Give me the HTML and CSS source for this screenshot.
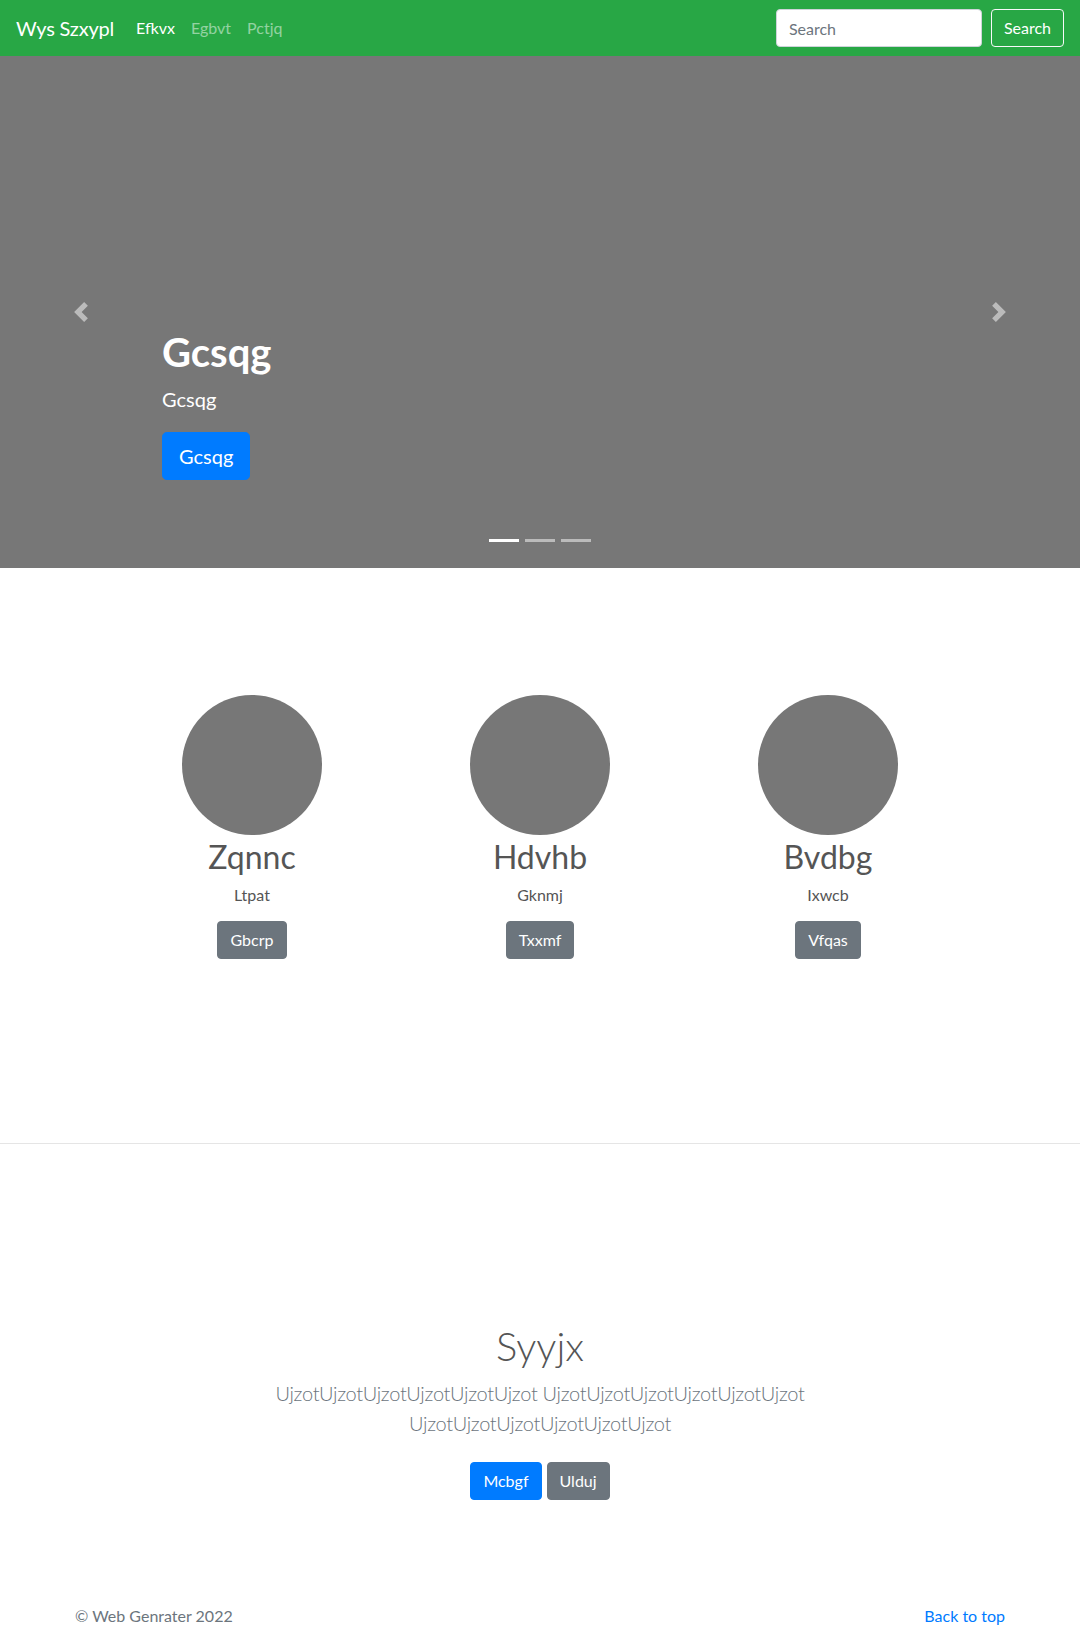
FILE: index.html
```html
<!DOCTYPE html>
<html lang="en">
<head>
<meta charset="utf-8">
<title>Wys Szxypl</title>
<link rel="stylesheet" href="styles.css">
</head>
<body>
<header class="navbar">
  <a class="brand" href="#">Wys Szxypl</a>
  <nav class="nav">
    <a class="nav-link active" href="#">Efkvx</a>
    <a class="nav-link" href="#">Egbvt</a>
    <a class="nav-link" href="#">Pctjq</a>
  </nav>
  <form class="search-form">
    <input class="search-input" type="text" placeholder="Search">
    <button class="btn-outline" type="button">Search</button>
  </form>
</header>

<section class="carousel">
  <a class="control control-prev" href="#">
    <svg class="control-icon" viewBox="0 0 8 8" width="20" height="20"><path fill="#fff" d="M5.25 0l-4 4 4 4 1.5-1.5L4.25 4l2.5-2.5L5.25 0z"/></svg>
  </a>
  <div class="caption">
    <h1 class="caption-title">Gcsqg</h1>
    <p class="caption-text">Gcsqg</p>
    <a class="btn btn-lg btn-primary" href="#">Gcsqg</a>
  </div>
  <a class="control control-next" href="#">
    <svg class="control-icon" viewBox="0 0 8 8" width="20" height="20"><path fill="#fff" d="M2.75 0l-1.5 1.5L3.75 4l-2.5 2.5L2.75 8l4-4-4-4z"/></svg>
  </a>
  <ol class="indicators">
    <li class="indicator active"></li>
    <li class="indicator"></li>
    <li class="indicator"></li>
  </ol>
</section>

<section class="marketing">
  <div class="marketing-row">
    <div class="feature">
      <div class="circle"></div>
      <h2 class="feature-title">Zqnnc</h2>
      <p class="feature-text">Ltpat</p>
      <a class="btn btn-secondary" href="#">Gbcrp</a>
    </div>
    <div class="feature">
      <div class="circle"></div>
      <h2 class="feature-title">Hdvhb</h2>
      <p class="feature-text">Gknmj</p>
      <a class="btn btn-secondary" href="#">Txxmf</a>
    </div>
    <div class="feature">
      <div class="circle"></div>
      <h2 class="feature-title">Bvdbg</h2>
      <p class="feature-text">Ixwcb</p>
      <a class="btn btn-secondary" href="#">Vfqas</a>
    </div>
  </div>
</section>

<hr class="divider">

<section class="jumbotron">
  <div class="jumbo-inner">
    <h1 class="jumbo-title">Syyjx</h1>
    <p class="lead">UjzotUjzotUjzotUjzotUjzotUjzot UjzotUjzotUjzotUjzotUjzotUjzot UjzotUjzotUjzotUjzotUjzotUjzot</p>
    <div class="jumbo-buttons">
      <a class="btn btn-primary" href="#">Mcbgf</a>
      <a class="btn btn-secondary" href="#">Ulduj</a>
    </div>
  </div>
</section>

<footer class="footer">
  <p class="copy">© Web Genrater 2022</p>
  <a class="back-top" href="#">Back to top</a>
</footer>
</body>
</html>
```

FILE: styles.css
```css
* { box-sizing: border-box; }
html, body { margin: 0; padding: 0; }
body {
  font-family: "Lato", "Noto Sans", sans-serif;
  font-size: 16px;
  line-height: 1.5;
  color: #555;
  background: #fff;
}
a { text-decoration: none; }

/* navbar */
.navbar {
  height: 56px;
  background: #28a745;
  display: flex;
  align-items: center;
  padding: 0 16px;
}
.brand {
  color: #fff;
  font-size: 20px;
  line-height: 30px;
  margin-right: 14px;
  letter-spacing: -0.2px;
}
.nav { display: flex; flex: 1; }
.nav-link {
  color: rgba(255,255,255,.5);
  padding: 8px;
  line-height: 24px;
}
.nav-link.active { color: #fff; }
.search-form { display: flex; align-items: center; gap: 9px; }
.search-input {
  width: 206px;
  height: 38px;
  padding: 6px 12px;
  font: inherit;
  font-size: 16px;
  color: #495057;
  border: 1px solid #ced4da;
  border-radius: 4px;
  background: #fff;
}
.search-input::placeholder { color: #6c757d; }
.btn-outline {
  height: 38px;
  padding: 6px 12px;
  font: inherit;
  font-size: 16px;
  color: #fff;
  background: transparent;
  border: 1px solid #f8f9fa;
  border-radius: 4px;
  min-width: 73px;
}

/* carousel */
.carousel {
  position: relative;
  height: 512px;
  background: #777;
}
.control {
  position: absolute;
  top: 0;
  bottom: 0;
  width: 15%;
  display: flex;
  align-items: center;
  justify-content: center;
  opacity: .5;
}
.control-prev { left: 0; }
.control-next { right: 0; }
.control-icon { display: block; }
.caption {
  position: absolute;
  left: 15%;
  right: 15%;
  bottom: 88px;
  color: #fff;
  text-align: left;
}
.caption-title {
  margin: 0 0 8px;
  font-size: 40px;
  line-height: 48px;
  font-weight: 700;
}
.caption-text {
  margin: 0 0 18px;
  font-size: 20px;
  line-height: 30px;
}
.btn {
  display: inline-block;
  color: #fff;
  font-size: 16px;
  line-height: 24px;
  padding: 6px 12px;
  border: 1px solid transparent;
  border-radius: 4px;
}
.btn-lg {
  font-size: 20px;
  line-height: 30px;
  padding: 8px 16px;
  border-radius: 4.8px;
}
.btn-primary { background: #007bff; border-color: #007bff; }
.btn-secondary { background: #6c757d; border-color: #6c757d; }
.indicators {
  position: absolute;
  left: 0;
  right: 0;
  bottom: 16px;
  margin: 0;
  padding: 0;
  list-style: none;
  display: flex;
  justify-content: center;
}
.indicator {
  width: 30px;
  height: 3px;
  margin: 10px 3px;
  background: rgba(255,255,255,.5);
}
.indicator.active { background: #fff; }

/* marketing */
.marketing { padding: 127px 0 0; }
.marketing-row {
  width: 864px;
  margin: 0 auto;
  display: grid;
  grid-template-columns: repeat(3, 1fr);
}
.feature { text-align: center; display: flex; flex-direction: column; align-items: center; }
.circle {
  width: 140px;
  height: 140px;
  border-radius: 50%;
  background: #777;
}
.feature-title {
  margin: 3px 0 7px;
  font-size: 32px;
  line-height: 38px;
  font-weight: 400;
  color: #555;
}
.feature-text { margin: 0 0 14px; line-height: 24px; }

.divider {
  margin: 184px 0 0;
  border: 0;
  border-top: 1px solid rgba(0,0,0,.1);
  height: 0;
}

/* jumbotron */
.jumbotron { padding: 178px 0 56px; text-align: center; }
.jumbo-inner { max-width: 640px; margin: 0 auto; padding: 0 15px; }
.jumbo-title {
  margin: 0 0 8px;
  font-size: 40px;
  line-height: 48px;
  font-weight: 300;
  color: #555;
}
.lead {
  margin: 0;
  font-size: 20px;
  line-height: 30px;
  font-weight: 300;
  color: #6c757d;
  letter-spacing: -0.3px;
}
.jumbo-buttons {
  display: flex;
  justify-content: center;
  gap: 5px;
  margin-top: 24px;
}

/* footer */
.footer {
  width: 930px;
  margin: 0 auto;
  padding: 48px 0 48px;
  display: flex;
  justify-content: space-between;
  color: #6c757d;
}
.copy { margin: 0; }
.back-top { color: #007bff; }
```
